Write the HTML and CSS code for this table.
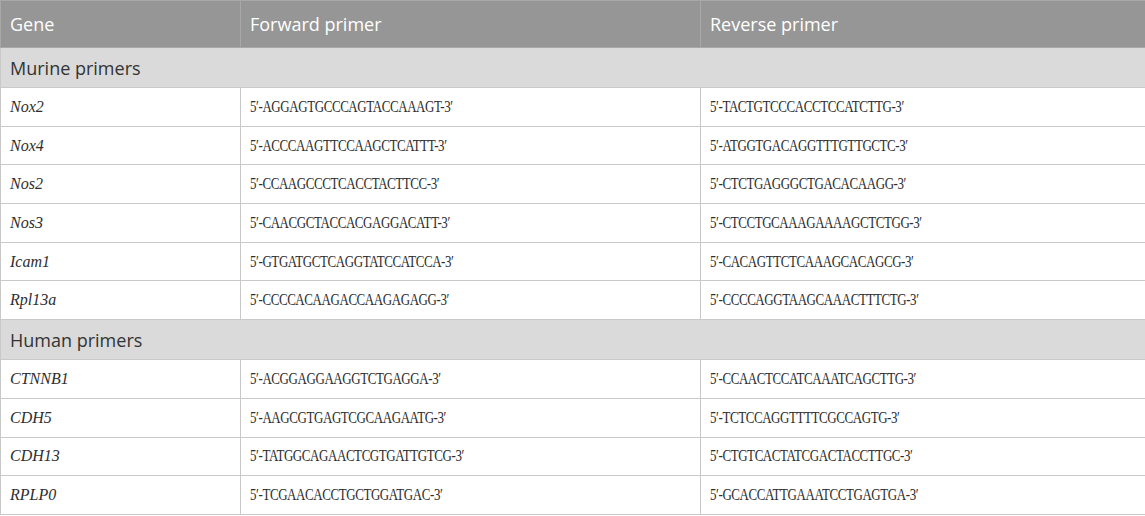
FILE: index.html
```html
<!DOCTYPE html>
<html>
<head>
<meta charset="utf-8">
<link rel="stylesheet" href="styles.css">
</head>
<body>
<table class="primers">
  <colgroup>
    <col class="c1"><col class="c2"><col class="c3">
  </colgroup>
  <thead>
    <tr class="head"><th>Gene</th><th>Forward primer</th><th>Reverse primer</th></tr>
  </thead>
  <tbody>
    <tr class="section"><td colspan="3">Murine primers</td></tr>
    <tr class="row"><td class="gene">Nox2</td><td class="seq"><span>5′-AGGAGTGCCCAGTACCAAAGT-3′</span></td><td class="seq"><span>5′-TACTGTCCCACCTCCATCTTG-3′</span></td></tr>
    <tr class="row"><td class="gene">Nox4</td><td class="seq"><span>5′-ACCCAAGTTCCAAGCTCATTT-3′</span></td><td class="seq"><span>5′-ATGGTGACAGGTTTGTTGCTC-3′</span></td></tr>
    <tr class="row"><td class="gene">Nos2</td><td class="seq"><span>5′-CCAAGCCCTCACCTACTTCC-3′</span></td><td class="seq"><span>5′-CTCTGAGGGCTGACACAAGG-3′</span></td></tr>
    <tr class="row"><td class="gene">Nos3</td><td class="seq"><span>5′-CAACGCTACCACGAGGACATT-3′</span></td><td class="seq"><span>5′-CTCCTGCAAAGAAAAGCTCTGG-3′</span></td></tr>
    <tr class="row"><td class="gene">Icam1</td><td class="seq"><span>5′-GTGATGCTCAGGTATCCATCCA-3′</span></td><td class="seq"><span>5′-CACAGTTCTCAAAGCACAGCG-3′</span></td></tr>
    <tr class="row"><td class="gene">Rpl13a</td><td class="seq"><span>5′-CCCCACAAGACCAAGAGAGG-3′</span></td><td class="seq"><span>5′-CCCCAGGTAAGCAAACTTTCTG-3′</span></td></tr>
    <tr class="section"><td colspan="3">Human primers</td></tr>
    <tr class="row"><td class="gene">CTNNB1</td><td class="seq"><span>5′-ACGGAGGAAGGTCTGAGGA-3′</span></td><td class="seq"><span>5′-CCAACTCCATCAAATCAGCTTG-3′</span></td></tr>
    <tr class="row"><td class="gene">CDH5</td><td class="seq"><span>5′-AAGCGTGAGTCGCAAGAATG-3′</span></td><td class="seq"><span>5′-TCTCCAGGTTTTCGCCAGTG-3′</span></td></tr>
    <tr class="row"><td class="gene">CDH13</td><td class="seq"><span>5′-TATGGCAGAACTCGTGATTGTCG-3′</span></td><td class="seq"><span>5′-CTGTCACTATCGACTACCTTGC-3′</span></td></tr>
    <tr class="row"><td class="gene">RPLP0</td><td class="seq"><span>5′-TCGAACACCTGCTGGATGAC-3′</span></td><td class="seq"><span>5′-GCACCATTGAAATCCTGAGTGA-3′</span></td></tr>
  </tbody>
</table>
</body>
</html>
```
FILE: styles.css
```css
html, body {
  margin: 0;
  padding: 0;
  background: #ffffff;
}
.primers {
  width: 1145px;
  border-collapse: collapse;
  table-layout: fixed;
}
.c1 { width: 240px; }
.c2 { width: 460px; }
.c3 { width: 445px; }
.primers th, .primers td {
  border: 1px solid #c9c9c9;
  padding: 0 9px;
  text-align: left;
  vertical-align: middle;
  white-space: nowrap;
}
.head th {
  background: #969696;
  color: #ffffff;
  font-family: "Open Sans", sans-serif;
  font-weight: 400;
  font-size: 18px;
  height: 46px;
  border-color: #a8a8a8;
}
.section td {
  background: #d9dad9;
  color: #333333;
  font-family: "Open Sans", sans-serif;
  font-size: 18px;
  height: 39px;
}
.row td {
  height: 37.7px;
  color: #2e2e2e;
  font-family: "Liberation Serif", serif;
}
.gene {
  font-style: italic;
  font-size: 16px;
}
.seq {
  font-size: 16px;
  letter-spacing: -0.5px;
}
.seq span {
  display: inline-block;
  transform: scaleX(0.81);
  transform-origin: left center;
}
```
